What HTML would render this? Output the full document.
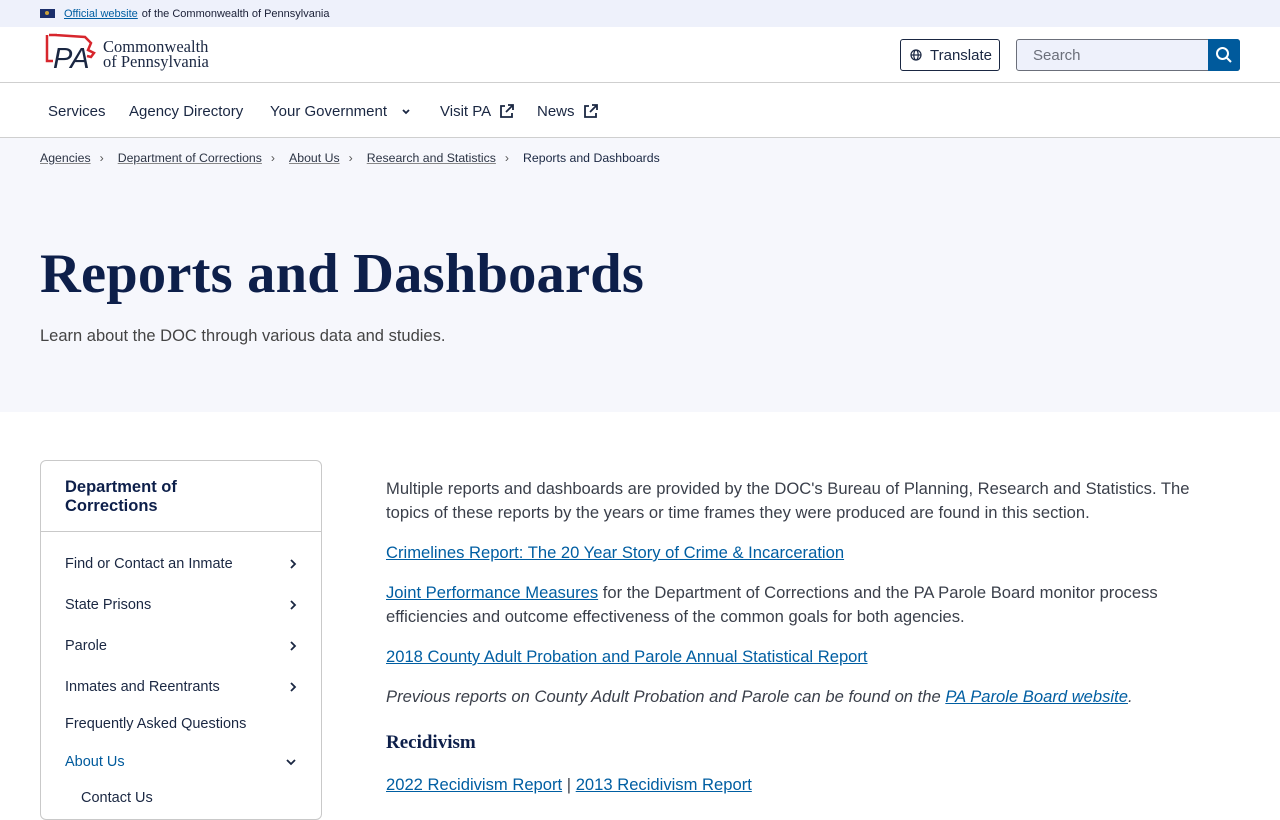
<!DOCTYPE html>
<html><head><meta charset="utf-8"><style>
*{box-sizing:border-box;margin:0;padding:0}
body{width:1280px;height:800px;overflow:hidden;font-family:"Liberation Sans",sans-serif;color:#1f2430;background:#fff;position:relative}
a{color:#005ea2;text-decoration:underline}
.top{height:27px;background:#eef1fb;font-size:11px;display:flex;align-items:center;padding-left:40px;color:#1a1f36}
.top .flag{width:15px;height:9px;background:#1b2f6b;margin-right:9px;position:relative}
.top .flag:after{content:"";position:absolute;left:5px;top:2px;width:4px;height:4px;background:#c9a23a;border-radius:50%}
.top a{margin-right:4px}
.hdr{height:56px;border-bottom:1px solid #cfcfcf;position:relative}
.logo{position:absolute;left:45px;top:5px}
.logotext{position:absolute;left:103px;top:12px;font-family:"Liberation Serif",serif;font-size:16.5px;line-height:15px;color:#1a2742}
.tr{position:absolute;left:900px;top:12px;width:100px;height:32px;border:1px solid #1a2742;border-radius:3px;font-size:15px;display:flex;align-items:center;padding-left:9px;gap:8px;color:#1a2742}
.srch{position:absolute;left:1016px;top:12px;width:224px;height:32px;border:1px solid #6b6f7a;border-radius:3px;background:#eef1fb;font-size:15px;color:#6b6f7a;padding:7px 16px}
.sbtn{position:absolute;right:-1px;top:-1px;width:32px;height:32px;background:#005a9c;border-radius:0 3px 3px 0;display:flex;align-items:center;justify-content:center}
.nav{height:55px;border-bottom:1px solid #cfcfcf;position:relative;font-size:15px;color:#1a2742}
.nav span{position:absolute;top:20px;display:flex;align-items:center;gap:8px}
.hero{background:#f6f7fc;height:274px;padding:0 40px;position:relative}
.bc{position:absolute;top:13px;left:40px;font-size:12.3px;color:#1a2742;display:flex}
.bc u{color:#2c3444;text-decoration-color:#888}
.bc i{font-style:normal;margin:0 14px 0 9px;color:#555}
h1{position:absolute;top:104px;left:40px;font-family:"Liberation Serif",serif;font-weight:bold;font-size:56.5px;color:#0d1f4a;letter-spacing:0.2px}
.sub{position:absolute;top:189px;left:40px;font-size:16.5px;color:#444}
.side{position:absolute;left:40px;top:460px;width:282px;height:360px;border:1px solid #c9c9c9;border-radius:6px}
.side h3{font-size:16.5px;color:#0d1f4a;padding:17px 24px 15px;line-height:19px;border-bottom:1px solid #c9c9c9}
.si{position:absolute;left:65px;width:232px;font-size:14.5px;color:#1a2742;display:flex;justify-content:space-between;align-items:center}
.main{position:absolute;left:386px;top:477px;width:830px;font-size:16.6px;line-height:24px;color:#3a3f4a}
.main p{margin-bottom:16px}
.main h4{font-family:"Liberation Serif",serif;font-size:19px;color:#0d1f4a;margin:22px 0 18px}
</style></head><body>
<div class="top"><div class="flag"></div><a>Official website</a> of the Commonwealth of Pennsylvania</div>
<div class="hdr">
<svg class="logo" width="52" height="40" viewBox="0 0 52 40"><path d="M4 3h8 M2 3v26h6 M10 3l30 2 6 6-3 7 6 3-3 4-4-1" fill="none" stroke="#d7262d" stroke-width="2.5"/><text x="8" y="36" font-family="Liberation Sans" font-style="italic" font-size="29" fill="#1a2742">PA</text></svg>
<div class="logotext">Commonwealth<br>of Pennsylvania</div>
<div class="tr"><svg width="12" height="12" viewBox="0 0 12 12" fill="none" stroke="#1a2742" stroke-width="1.2"><circle cx="6" cy="6" r="5"/><ellipse cx="6" cy="6" rx="2.2" ry="5"/><path d="M1 6h10"/></svg>Translate</div>
<div class="srch">Search<div class="sbtn"><svg width="18" height="18" viewBox="0 0 18 18" fill="none" stroke="#fff" stroke-width="2"><circle cx="7.5" cy="7.5" r="5.5"/><path d="M12 12l4 4"/></svg></div></div>
</div>
<div class="nav"><span style="left:48px">Services</span><span style="left:129px">Agency Directory</span><span style="left:270px;gap:14px">Your Government <svg width="10" height="8" viewBox="0 0 10 8" fill="none" stroke="#1a2742" stroke-width="1.8"><path d="M2 2l3 3 3-3"/></svg></span><span style="left:440px">Visit PA <svg width="15" height="15" viewBox="0 0 15 15" fill="none" stroke="#1a2742" stroke-width="1.8"><path d="M6 2H2v11h11V9M9 1h5v5M14 1L7 8"/></svg></span><span style="left:537px">News <svg width="15" height="15" viewBox="0 0 15 15" fill="none" stroke="#1a2742" stroke-width="1.8"><path d="M6 2H2v11h11V9M9 1h5v5M14 1L7 8"/></svg></span></div>
<div class="hero">
<div class="bc"><u>Agencies</u><i>›</i><u>Department of Corrections</u><i>›</i><u>About Us</u><i>›</i><u>Research and Statistics</u><i>›</i><span>Reports and Dashboards</span></div>
<h1>Reports and Dashboards</h1>
<div class="sub">Learn about the DOC through various data and studies.</div>
</div>
<div class="side"><h3>Department of<br>Corrections</h3></div>
<div class="si" style="top:556px">Find or Contact an Inmate<svg width="8" height="12" viewBox="0 0 8 12" fill="none" stroke="#1a2742" stroke-width="1.8"><path d="M2 2l4 4-4 4"/></svg></div>
<div class="si" style="top:597px">State Prisons<svg width="8" height="12" viewBox="0 0 8 12" fill="none" stroke="#1a2742" stroke-width="1.8"><path d="M2 2l4 4-4 4"/></svg></div>
<div class="si" style="top:638px">Parole<svg width="8" height="12" viewBox="0 0 8 12" fill="none" stroke="#1a2742" stroke-width="1.8"><path d="M2 2l4 4-4 4"/></svg></div>
<div class="si" style="top:679px">Inmates and Reentrants<svg width="8" height="12" viewBox="0 0 8 12" fill="none" stroke="#1a2742" stroke-width="1.8"><path d="M2 2l4 4-4 4"/></svg></div>
<div class="si" style="top:716px">Frequently Asked Questions</div>
<div class="si" style="top:754px;color:#005a9c">About Us<svg width="12" height="8" viewBox="0 0 12 8" fill="none" stroke="#1a2742" stroke-width="1.8"><path d="M2 2l4 4 4-4"/></svg></div>
<div class="si" style="top:790px;left:81px">Contact Us</div>
<div class="main">
<p>Multiple reports and dashboards are provided by the DOC's Bureau of Planning, Research and Statistics. The topics of these reports by the years or time frames they were produced are found in this section.</p>
<p><a>Crimelines Report: The 20 Year Story of Crime &amp; Incarceration</a></p>
<p><a>Joint Performance Measures</a> for the Department of Corrections and the PA Parole Board monitor process efficiencies and outcome effectiveness of the common goals for both agencies.</p>
<p><a>2018 County Adult Probation and Parole Annual Statistical Report</a></p>
<p><i>Previous reports on County Adult Probation and Parole can be found on the <a>PA Parole Board website</a>.</i></p>
<h4>Recidivism</h4>
<p><a>2022 Recidivism Report</a> | <a>2013 Recidivism Report</a></p>
</div>
</body></html>
